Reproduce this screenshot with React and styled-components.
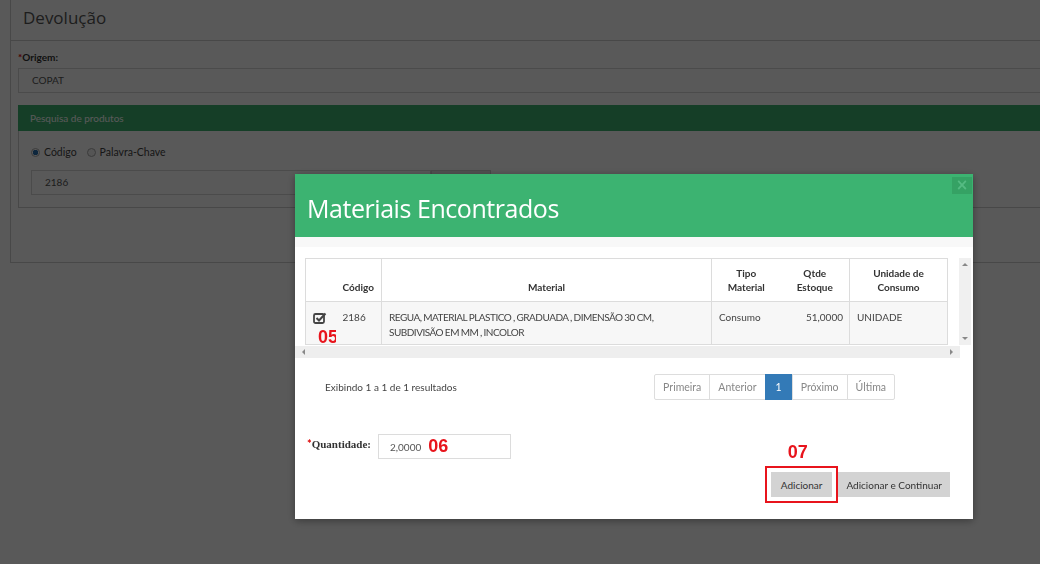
import React from 'react';
import styled, { createGlobalStyle } from 'styled-components';

const Global = createGlobalStyle`
  html, body { margin: 0; padding: 0; width: 1040px; height: 564px; overflow: hidden; background: #fff; }
  body { font-family: Lato, "Open Sans", sans-serif; color: #333; }
  * { box-sizing: border-box; }
`;

/* ---------- background page ---------- */
const Page = styled.div`
  padding-left: 10px;
  width: 100%;
  overflow: hidden;
`;
const Card = styled.div`
  border: 1px solid #cfcfcf;
  border-top: none;
  border-right: none;
  height: 263px;
  background: #fff;
`;
const CardTitle = styled.h1`
  margin: 0;
  height: 41px;
  padding: 6px 0 0 12px;
  font: 400 17px/23px "Open Sans", sans-serif;
  color: #555;
  border-bottom: 1px solid #cfcfcf;
`;
const CardBody = styled.div`
  padding: 9px 0 0 7px;
`;
const FieldLabel = styled.div`
  font: 700 10px/14px Lato, sans-serif;
  color: #333;
  &::before { content: '*'; color: #d00; }
`;
const TextInput = styled.div`
  margin-top: ${p => p.$mt || 0}px;
  height: 25px;
  width: ${p => p.$w || '100%'};
  border: 1px solid #d8d8d8;
  border-right: ${p => (p.$w ? '1px solid #d8d8d8' : 'none')};
  padding-left: 13px;
  font: 400 10px/23px Lato, sans-serif;
  color: #555;
  background: #fff;
`;
const SearchPanel = styled.div`
  margin-top: 12px;
`;
const PanelHead = styled.div`
  height: 26px;
  background: #3cb371;
  color: #fff;
  padding-left: 12px;
  font: 400 10px/26px Lato, sans-serif;
`;
const PanelBody = styled.div`
  height: 77px;
  border: 1px solid #cfcfcf;
  border-top: none;
  border-right: none;
  padding: 14px 0 0 12px;
`;
const RadioRow = styled.div`
  display: flex;
  align-items: center;
  height: 14px;
  gap: 4px;
  font: 400 10.5px Lato, sans-serif;
  color: #444;
`;
const Radio = styled.span`
  width: 9px;
  height: 9px;
  border-radius: 50%;
  border: 1px solid #aaa;
  background: ${p => (p.$on ? 'radial-gradient(circle, #2a6fb0 0 2.5px, #fff 3px)' : '#f2f2f2')};
  margin-left: ${p => p.$ml || 0}px;
`;
const SearchLine = styled.div`
  display: flex;
  margin-top: 11px;
`;
const SearchBtn = styled.div`
  width: 60px;
  height: 26px;
  background: #e8e8e8;
  border: 1px solid #d0d0d0;
`;

const Overlay = styled.div`
  position: fixed;
  inset: 0;
  background: rgba(0, 0, 0, 0.65);
`;

/* ---------- modal ---------- */
const Modal = styled.div`
  position: fixed;
  left: 295px;
  top: 174px;
  width: 678px;
  height: 345px;
  background: #fff;
  box-shadow: 0 2px 8px rgba(0, 0, 0, 0.35);
  display: flex;
  flex-direction: column;
`;
const ModalHead = styled.div`
  position: relative;
  height: 63px;
  background: #3cb371;
  padding: 19px 0 0 12px;
`;
const ModalTitle = styled.h2`
  margin: 0;
  font: 400 25px/31px "Open Sans", sans-serif;
  color: #fff;
  letter-spacing: -0.45px;
`;
const CloseBtn = styled.div`
  position: absolute;
  top: 3px;
  right: 1px;
  width: 20px;
  height: 17px;
  background: #35a264;
  color: #55bb83;
  font: 700 15px/17px "DejaVu Sans", sans-serif;
  text-align: center;
`;
const TopStrip = styled.div`
  height: 10px;
  background: #f8f8f8;
`;
const ScrollRow = styled.div`
  display: flex;
  padding: 11px 0 0 10px;
`;
const Table = styled.table`
  width: 642px;
  border-collapse: collapse;
  table-layout: fixed;
  border: 1px solid #dcdcdc;
  margin-right: 11px;
  font-family: Lato, sans-serif;
`;
const Th = styled.th`
  height: 43px;
  padding: 0 6px 7px;
  vertical-align: bottom;
  font: 700 10px/14px Lato, sans-serif;
  color: #333;
  text-align: ${p => p.$align || 'center'};
  border-left: ${p => (p.$bl ? '1px solid #dcdcdc' : 'none')};
  border-bottom: 1px solid #dcdcdc;
  background: #fff;
`;
const Td = styled.td`
  position: relative;
  height: 43px;
  padding: 8px 6px 0 7px;
  vertical-align: top;
  font: 400 10px/15px Lato, sans-serif;
  color: #444;
  text-align: ${p => p.$align || 'left'};
  border-left: ${p => (p.$bl ? '1px solid #dcdcdc' : 'none')};
  background: #f7f7f7;
  letter-spacing: ${p => (p.$tight ? '-0.5px' : '0')};
  word-spacing: ${p => (p.$tight ? '-0.3px' : '0')};
`;
const VScroll = styled.div`
  width: 12px;
  height: 87px;
  background: #f0f0f0;
  display: flex;
  flex-direction: column;
  justify-content: space-between;
  align-items: center;
  padding: 5px 0;
`;
const HScroll = styled.div`
  width: 665px;
  height: 12px;
  margin-top: 1px;
  background: #eeeeee;
  display: flex;
  justify-content: space-between;
  align-items: center;
  padding: 0 7px;
`;
const Arrow = styled.span`
  width: 0;
  height: 0;
  border: 3px solid transparent;
  ${p => p.$dir === 'up' && 'border-bottom-color:#888; border-top-width:0;'}
  ${p => p.$dir === 'down' && 'border-top-color:#888; border-bottom-width:0;'}
  ${p => p.$dir === 'left' && 'border-right-color:#888; border-left-width:0;'}
  ${p => p.$dir === 'right' && 'border-left-color:#888; border-right-width:0;'}
`;
const Mark = styled.span`
  font: 700 18px/17px "Liberation Sans", Arial, sans-serif;
  color: #e8141c;
`;
const CellMark = styled(Mark)`
  position: absolute;
  left: 12px;
  top: 27px;
`;
const PagerRow = styled.div`
  display: flex;
  align-items: center;
  justify-content: space-between;
  margin-top: 16px;
  padding: 0 78px 0 30px;
  height: 26px;
`;
const Info = styled.span`
  font: 400 10px Lato, sans-serif;
  color: #444;
`;
const Pager = styled.div`
  display: flex;
`;
const PageItem = styled.span`
  height: 26px;
  padding: 0 ${p => (p.$active ? 10 : 8)}px;
  margin-left: -1px;
  border: 1px solid ${p => (p.$active ? '#337ab7' : '#dddddd')};
  background: ${p => (p.$active ? '#337ab7' : '#fff')};
  color: ${p => (p.$active ? '#fff' : '#888')};
  font: 400 10.5px/24px Lato, sans-serif;
  &:first-child { border-radius: 2px 0 0 2px; }
  &:last-child { border-radius: 0 2px 2px 0; }
`;
const QtyRow = styled.div`
  display: flex;
  align-items: center;
  margin-top: 34px;
  padding-left: 12px;
  height: 25px;
`;
const QtyLabel = styled.span`
  width: 71px;
  font: 700 11px "Liberation Serif", serif;
  color: #333;
  margin-top: -6px;
  &::before { content: '*'; color: #d00; font-family: Lato, sans-serif; }
`;
const QtyInput = styled.div`
  width: 133px;
  height: 25px;
  border: 1px solid #dcdcdc;
  display: flex;
  align-items: center;
  gap: 7px;
  padding-left: 11px;
  font: 400 10px Lato, sans-serif;
  color: #555;
`;
const ButtonRow = styled.div`
  display: flex;
  justify-content: flex-end;
  align-items: center;
  margin-top: 7px;
  padding-right: 23px;
`;
const RedBox = styled.div`
  position: relative;
  border: 2px solid #e8141c;
  padding: 4px;
`;
const BoxMark = styled(Mark)`
  position: absolute;
  left: 21px;
  top: -24px;
`;
const Button = styled.button`
  height: 25px;
  padding: 0 ${p => p.$px || 9}px;
  border: none;
  background: #d3d3d3;
  color: #333;
  font: 400 10px Lato, sans-serif;
`;

const CheckIcon = () => (
  <svg width="14" height="12" viewBox="0 0 14 12">
    <rect x="1" y="2" width="10" height="9" rx="1.5" fill="none" stroke="#444" strokeWidth="1.8" />
    <path d="M3.5 6 L6 8.5 L12.5 1.5" fill="none" stroke="#444" strokeWidth="2" />
  </svg>
);

export default function App() {
  return (
    <>
      <Global />
      <Page>
        <Card>
          <CardTitle>Devolução</CardTitle>
          <CardBody>
            <FieldLabel>Origem:</FieldLabel>
            <TextInput $mt={4}>COPAT</TextInput>
            <SearchPanel>
              <PanelHead>Pesquisa de produtos</PanelHead>
              <PanelBody>
                <RadioRow>
                  <Radio $on />
                  <span>Código</span>
                  <Radio $ml={6} />
                  <span>Palavra-Chave</span>
                </RadioRow>
                <SearchLine>
                  <TextInput $w="400px">2186</TextInput>
                  <SearchBtn />
                </SearchLine>
              </PanelBody>
            </SearchPanel>
          </CardBody>
        </Card>
      </Page>
      <Overlay />
      <Modal>
        <ModalHead>
          <ModalTitle>Materiais Encontrados</ModalTitle>
          <CloseBtn>×</CloseBtn>
        </ModalHead>
        <TopStrip />
        <ScrollRow>
          <Table>
            <colgroup>
              <col style={{ width: 30 }} />
              <col style={{ width: 46 }} />
              <col style={{ width: 330 }} />
              <col style={{ width: 69 }} />
              <col style={{ width: 69 }} />
              <col style={{ width: 98 }} />
            </colgroup>
            <thead>
              <tr>
                <Th />
                <Th $align="left" style={{ paddingLeft: 7 }}>Código</Th>
                <Th $bl>Material</Th>
                <Th $bl>Tipo<br />Material</Th>
                <Th>Qtde<br />Estoque</Th>
                <Th $bl>Unidade de<br />Consumo</Th>
              </tr>
            </thead>
            <tbody>
              <tr>
                <Td style={{ paddingTop: 10 }}>
                  <CheckIcon />
                  <CellMark>05</CellMark>
                </Td>
                <Td>2186</Td>
                <Td $bl $tight>
                  REGUA, MATERIAL PLASTICO , GRADUADA , DIMENSÃO 30 CM,<br />
                  SUBDIVISÃO EM MM , INCOLOR
                </Td>
                <Td $bl>Consumo</Td>
                <Td $align="right">51,0000</Td>
                <Td $bl>UNIDADE</Td>
              </tr>
            </tbody>
          </Table>
          <VScroll>
            <Arrow $dir="up" />
            <Arrow $dir="down" />
          </VScroll>
        </ScrollRow>
        <HScroll>
          <Arrow $dir="left" />
          <Arrow $dir="right" />
        </HScroll>
        <PagerRow>
          <Info>Exibindo 1 a 1 de 1 resultados</Info>
          <Pager>
            <PageItem>Primeira</PageItem>
            <PageItem>Anterior</PageItem>
            <PageItem $active>1</PageItem>
            <PageItem>Próximo</PageItem>
            <PageItem>Última</PageItem>
          </Pager>
        </PagerRow>
        <QtyRow>
          <QtyLabel>Quantidade:</QtyLabel>
          <QtyInput>
            <span>2,0000</span>
            <Mark>06</Mark>
          </QtyInput>
        </QtyRow>
        <ButtonRow>
          <RedBox>
            <BoxMark>07</BoxMark>
            <Button $px={10}>Adicionar</Button>
          </RedBox>
          <Button $px={8}>Adicionar e Continuar</Button>
        </ButtonRow>
      </Modal>
    </>
  );
}
